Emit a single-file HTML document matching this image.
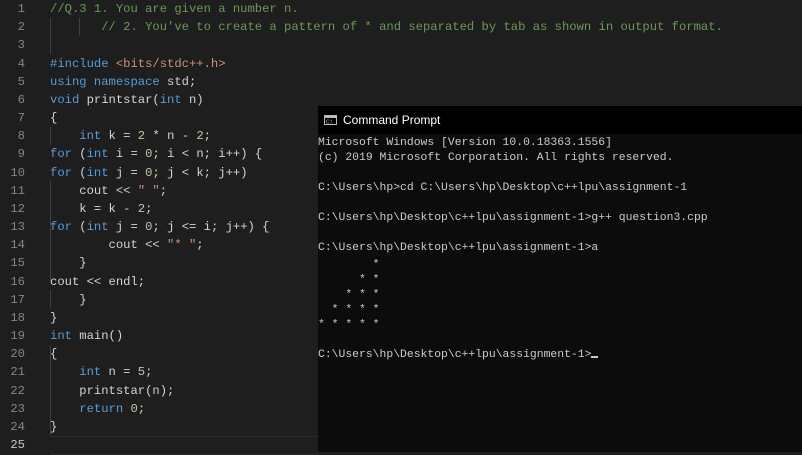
<!DOCTYPE html>
<html><head><meta charset="utf-8"><style>
body{margin:0;width:802px;height:452px;background:#1e1e1e;overflow:hidden;position:relative;font-family:"Liberation Mono",monospace}
.ed{position:absolute;left:0;top:0;font-size:12.2px;line-height:18.17px;color:#d4d4d4;white-space:pre}
.ln{position:absolute;left:0;width:25px;text-align:right;color:#858585}
.cd{position:absolute;left:50px}
.k{color:#569cd6}.c{color:#6a9955}.s{color:#ce9178}.n{color:#b5cea8}
.g{position:absolute;width:1px;background:#404040}
.cur{position:absolute;left:50px;top:436px;width:268px;height:17px;border-top:1px solid #2a2a2a;border-bottom:1px solid #2a2a2a}
.cmd{position:absolute;left:318px;top:106px;width:484px;height:346px;background:#0c0c0c}
.tb{position:absolute;left:0;top:0;width:484px;height:28px;background:#000;color:#fff;font-family:"Liberation Sans",sans-serif;font-size:12px;line-height:28px}
.cl{position:absolute;left:0;font-size:11.4px;color:#cccccc;white-space:pre;line-height:14px}
</style></head><body>
<div class="g" style="left:50px;top:18px;height:36px"></div>
<div class="g" style="left:79px;top:18px;height:18px"></div>
<div class="g" style="left:50px;top:127px;height:18px"></div>
<div class="g" style="left:50px;top:181px;height:100px"></div>
<div class="g" style="left:50px;top:290px;height:18px"></div>
<div class="g" style="left:50px;top:345px;height:90px"></div>
<div class="cur"></div>
<div class="ed">
<div class="ln" style="top:0">1
2
3
4
5
6
7
8
9
10
11
12
13
14
15
16
17
18
19
20
21
22
23
24
<span style="color:#c6c6c6">25</span></div>
<div class="cd" style="top:0"><span class="c">//Q.3 1. You are given a number n.</span>
<span class="c">       // 2. You've to create a pattern of * and separated by tab as shown in output format.</span>

<span class="k">#include</span> <span class="s">&lt;bits/stdc++.h&gt;</span>
<span class="k">using namespace</span> std;
<span class="k">void</span> printstar(<span class="k">int</span> n)
{
    <span class="k">int</span> k = <span class="n">2</span> * n - <span class="n">2</span>;
<span class="k">for</span> (<span class="k">int</span> i = <span class="n">0</span>; i &lt; n; i++) {
<span class="k">for</span> (<span class="k">int</span> j = <span class="n">0</span>; j &lt; k; j++)
    cout &lt;&lt; <span class="s">" "</span>;
    k = k - <span class="n">2</span>;
<span class="k">for</span> (<span class="k">int</span> j = <span class="n">0</span>; j &lt;= i; j++) {
        cout &lt;&lt; <span class="s">"* "</span>;
    }
cout &lt;&lt; endl;
    }
}
<span class="k">int</span> main()
{
    <span class="k">int</span> n = <span class="n">5</span>;
    printstar(n);
    <span class="k">return</span> <span class="n">0</span>;
}
</div></div>
<div class="cmd">
<div class="tb"><svg style="position:absolute;left:6px;top:9px" width="13" height="10"><rect x="0.5" y="0.5" width="12" height="9" fill="#000" stroke="#bbb"/><rect x="1" y="1" width="11" height="2" fill="#bbb"/><text x="2" y="8.5" font-size="5" fill="#ccc" font-family="Liberation Sans">C:\</text></svg><span style="position:absolute;left:25px">Command Prompt</span></div>
<div class="cl" style="top:30px">Microsoft Windows [Version 10.0.18363.1556]</div>
<div class="cl" style="top:45px">(c) 2019 Microsoft Corporation. All rights reserved.</div>
<div class="cl" style="top:75px">C:\Users\hp&gt;cd C:\Users\hp\Desktop\c++lpu\assignment-1</div>
<div class="cl" style="top:105px">C:\Users\hp\Desktop\c++lpu\assignment-1&gt;g++ question3.cpp</div>
<div class="cl" style="top:135px">C:\Users\hp\Desktop\c++lpu\assignment-1&gt;a</div>
<div class="cl" style="top:152px">        *</div>
<div class="cl" style="top:167px">      * *</div>
<div class="cl" style="top:182px">    * * *</div>
<div class="cl" style="top:197px">  * * * *</div>
<div class="cl" style="top:212px">* * * * *</div>
<div class="cl" style="top:242px">C:\Users\hp\Desktop\c++lpu\assignment-1&gt;<span style="display:inline-block;width:7px;height:2px;background:#ccc;vertical-align:-1px"></span></div>
</div>
</body></html>
